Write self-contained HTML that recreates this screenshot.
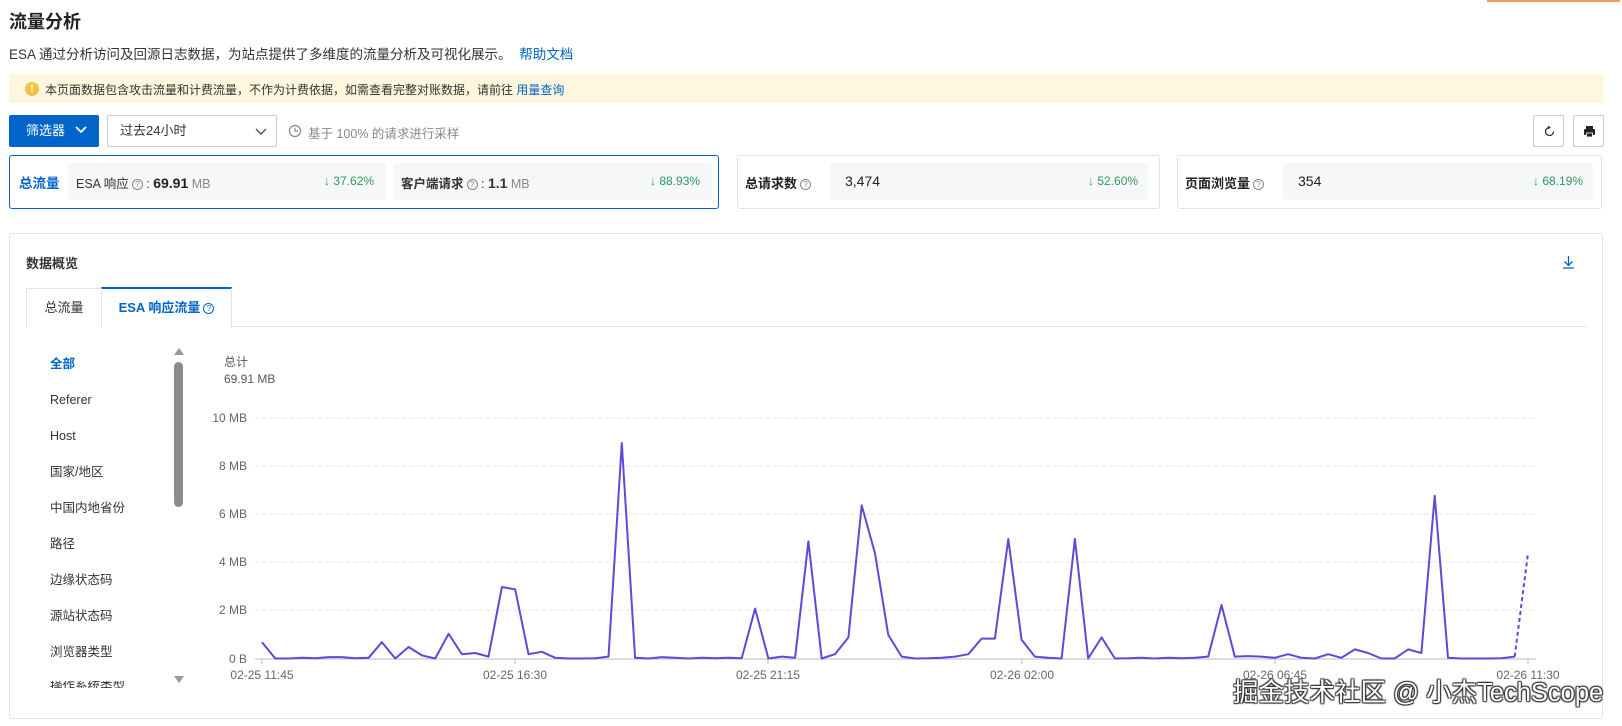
<!DOCTYPE html>
<html><head><meta charset="utf-8">
<style>
*{box-sizing:border-box;margin:0;padding:0}
body{width:1622px;height:726px;background:#fff;font-family:"Liberation Sans","Noto Sans CJK SC",sans-serif;color:#333;position:relative;overflow:hidden}
.a{position:absolute}
.q{display:inline-block;width:11px;height:11px;border:1px solid #888;border-radius:50%;font-size:8px;line-height:9px;text-align:center;color:#888;vertical-align:1px;margin-left:3px}
.box{position:absolute;background:#f6f7f9;border-radius:2px}
.g{color:#2d9a5a;font-size:12px}
</style></head><body>
<div class="a" style="left:1487px;top:0;width:133px;height:2px;background:#f59a5a"></div>
<div class="a" style="left:9px;top:8px;font-size:18px;font-weight:bold;color:#222">流量分析</div>
<div class="a" style="left:9px;top:43px;font-size:13.5px;color:#333">ESA 通过分析访问及回源日志数据，为站点提供了多维度的流量分析及可视化展示。 <span style="color:#0064c8;margin-left:4px">帮助文档</span></div>
<div class="a" style="left:9px;top:74px;width:1595px;height:29px;background:#fdf7dd"></div>
<div class="a" style="left:25px;top:82px;width:14px;height:14px;border-radius:50%;background:#f5c242;color:#fff;font-size:11px;font-weight:bold;text-align:center;line-height:14px">!</div>
<div class="a" style="left:45px;top:81px;font-size:12px;color:#333">本页面数据包含攻击流量和计费流量，不作为计费依据，如需查看完整对账数据，请前往 <span style="color:#0064c8">用量查询</span></div>
<div class="a" style="left:9px;top:115px;width:90px;height:32px;background:#0064c8;border-radius:2px;color:#fff;font-size:13px;line-height:32px;padding-left:17px">筛选器 <svg width="12" height="8" style="margin-left:6px;vertical-align:1px"><path d="M1 1l5 5 5-5" stroke="#fff" stroke-width="1.8" fill="none"/></svg></div>
<div class="a" style="left:107px;top:115px;width:170px;height:32px;border:1px solid #ccc;border-radius:2px;font-size:13px;line-height:30px;padding-left:12px;color:#333">过去24小时<svg width="12" height="8" class="a" style="left:147px;top:12px"><path d="M1 1l5 5 5-5" stroke="#555" stroke-width="1.4" fill="none"/></svg></div>
<svg class="a" style="left:288px;top:124px" width="14" height="14"><circle cx="7" cy="7" r="5.5" stroke="#888" stroke-width="1.2" fill="none"/><path d="M7 3.5V7h3" stroke="#888" stroke-width="1.2" fill="none"/></svg>
<div class="a" style="left:308px;top:123px;font-size:12.5px;color:#888">基于 100% 的请求进行采样</div>
<div class="a" style="left:1533px;top:115px;width:31px;height:32px;border:1px solid #ccc;border-radius:2px"><svg class="a" style="left:10px;top:10px" width="11" height="11"><path d="M5.5 1.5A4 4 0 1 0 9.5 5.5" stroke="#333" stroke-width="1.3" fill="none"/><path d="M4 0l2 1.5-2 1.5" stroke="#333" fill="none"/></svg></div>
<div class="a" style="left:1573px;top:115px;width:31px;height:32px;border:1px solid #ccc;border-radius:2px"><svg class="a" style="left:9px;top:9px" width="13" height="13"><rect x="3" y="1" width="7" height="3" fill="#222"/><rect x="1" y="4" width="11" height="6" rx="1" fill="#222"/><rect x="3.5" y="8" width="6" height="4" fill="#222" stroke="#fff" stroke-width=".8"/></svg></div>

<div class="a" style="left:9px;top:155px;width:710px;height:54px;border:1px solid #0064c8;border-radius:3px"></div>
<div class="a" style="left:19px;top:172px;font-size:13.5px;font-weight:bold;color:#0064c8">总流量</div>
<div class="box" style="left:68px;top:163px;width:318px;height:37px"></div>
<div class="a" style="left:76px;top:173px;font-size:12.5px;color:#333">ESA 响应<span class="q">?</span> : <b style="font-size:14px;color:#222">69.91</b> <span style="color:#888">MB</span></div>
<div class="a g" style="left:324px;top:174px">↓ 37.62%</div>
<div class="box" style="left:393px;top:163px;width:319px;height:37px"></div>
<div class="a" style="left:401px;top:173px;font-size:12.5px;font-weight:bold;color:#333">客户端请求<span class="q" style="font-weight:normal">?</span><span style="font-weight:normal"> : </span><b style="font-size:14px">1.1</b> <span style="color:#888;font-weight:normal">MB</span></div>
<div class="a g" style="left:650px;top:174px">↓ 88.93%</div>

<div class="a" style="left:737px;top:155px;width:423px;height:54px;border:1px solid #e3e3e3;border-radius:3px"></div>
<div class="a" style="left:745px;top:173px;font-size:13px;font-weight:bold;color:#222">总请求数<span class="q" style="font-weight:normal">?</span></div>
<div class="box" style="left:830px;top:163px;width:318px;height:37px"></div>
<div class="a" style="left:845px;top:173px;font-size:14px;color:#222">3,474</div>
<div class="a g" style="left:1088px;top:174px">↓ 52.60%</div>

<div class="a" style="left:1177px;top:155px;width:425px;height:54px;border:1px solid #e3e3e3;border-radius:3px"></div>
<div class="a" style="left:1185px;top:173px;font-size:13px;font-weight:bold;color:#222">页面浏览量<span class="q" style="font-weight:normal">?</span></div>
<div class="box" style="left:1283px;top:163px;width:310px;height:37px"></div>
<div class="a" style="left:1298px;top:173px;font-size:14px;color:#222">354</div>
<div class="a g" style="left:1533px;top:174px">↓ 68.19%</div>

<div class="a" style="left:9px;top:233px;width:1594px;height:486px;border:1px solid #e3e3e3;border-radius:3px"></div>
<div class="a" style="left:26px;top:253px;font-size:13px;font-weight:bold;color:#333">数据概览</div>
<svg class="a" style="left:1562px;top:255px" width="13" height="14"><path d="M6.5 1v9M2.5 6.5l4 4 4-4M1 13h11" stroke="#0064c8" stroke-width="1.3" fill="none"/></svg>
<div class="a" style="left:26px;top:326px;width:1561px;height:1px;background:#e3e3e3"></div>
<div class="a" style="left:26px;top:288px;width:76px;height:39px;border:1px solid #e3e3e3;border-bottom:none;background:#fff;font-size:13px;line-height:38px;text-align:center;color:#333">总流量</div>
<div class="a" style="left:101px;top:287px;width:131px;height:41px;border:1px solid #e3e3e3;border-top:2px solid #0064c8;border-bottom:none;background:#fff;font-size:13px;line-height:38px;text-align:center;color:#0064c8;font-weight:bold">ESA 响应流量<span class="q" style="border-color:#0064c8;color:#0064c8;font-weight:normal">?</span></div>

<div class="a" style="left:50px;top:346px;font-size:12.5px;line-height:36px;color:#333">
<div style="color:#0064c8;font-weight:bold">全部</div><div>Referer</div><div>Host</div><div>国家/地区</div><div>中国内地省份</div><div>路径</div><div>边缘状态码</div><div>源站状态码</div><div>浏览器类型</div>
</div>
<div class="a" style="left:50px;top:681px;font-size:12.5px;color:#333;height:7px;overflow:hidden;line-height:10px">操作系统类型</div>
<svg class="a" style="left:174px;top:348px" width="10" height="8"><path d="M0 7h10L5 0z" fill="#999"/></svg>
<svg class="a" style="left:174px;top:676px" width="10" height="8"><path d="M0 0h10L5 7z" fill="#999"/></svg>
<div class="a" style="left:174px;top:362px;width:9px;height:145px;background:#8c8c8c;border-radius:5px"></div>

<div class="a" style="left:224px;top:353px;font-size:12px;color:#555">总计</div>
<div class="a" style="left:224px;top:372px;font-size:12px;color:#555">69.91 MB</div>
<svg class="a" style="left:0;top:0" width="1622" height="726" id="ch">
<g font-family="Liberation Sans, sans-serif" font-size="12" fill="#666" text-anchor="end">
<text x="247" y="422">10 MB</text><text x="247" y="470">8 MB</text><text x="247" y="518">6 MB</text><text x="247" y="566">4 MB</text><text x="247" y="614">2 MB</text><text x="247" y="663">0 B</text>
</g>
<g stroke="#e6e6e6" stroke-dasharray="4 3"><path d="M255 418H1536M255 466H1536M255 514H1536M255 562H1536M255 610H1536"/></g>
<path d="M255 659H1536" stroke="#bbb"/>
<g stroke="#bbb"><path d="M262 659v5M515 659v5M768 659v5M1022 659v5M1275 659v5M1528 659v5"/></g>
<g font-family="Liberation Sans, sans-serif" font-size="12" fill="#666" text-anchor="middle">
<text x="262" y="679">02-25 11:45</text><text x="515" y="679">02-25 16:30</text><text x="768" y="679">02-25 21:15</text><text x="1022" y="679">02-26 02:00</text><text x="1275" y="679">02-26 06:45</text><text x="1528" y="679">02-26 11:30</text>
</g>
<polyline id="ln" fill="none" stroke="#5b4bd8" stroke-width="2" stroke-linejoin="round"/>
<polyline id="ld" fill="none" stroke="#5b4bd8" stroke-width="2" stroke-dasharray="4 3"/>
</svg>
<div class="a" style="left:1233px;top:672px;font-size:25.5px;color:#fff;text-shadow:0 0 1px #333,1px 1px 1px #333,-1px -1px 1px #333,1px -1px 1px #333,-1px 1px 1px #333;white-space:nowrap">掘金技术社区 @ 小杰TechScope</div>
<script>
var v=[0.7,0.02,0.02,0.05,0.03,0.08,0.08,0.03,0.05,0.7,0.02,0.5,0.15,0.02,1.05,0.2,0.25,0.1,3.0,2.9,0.2,0.3,0.05,0.02,0.02,0.03,0.1,9.0,0.05,0.02,0.08,0.05,0.02,0.05,0.03,0.05,0.03,2.1,0.02,0.1,0.05,4.9,0.02,0.2,0.9,6.4,4.4,1.0,0.1,0.02,0.03,0.05,0.1,0.2,0.85,0.85,5.0,0.8,0.1,0.05,0.02,5.0,0.02,0.9,0.02,0.03,0.05,0.02,0.05,0.03,0.05,0.1,2.25,0.1,0.12,0.1,0.05,0.2,0.05,0.02,0.2,0.05,0.4,0.25,0.02,0.02,0.4,0.25,6.8,0.05,0.02,0.02,0.02,0.03,0.1,4.4];
function P(i){return (262+i*1266/95).toFixed(1)+","+(659-v[i]*24).toFixed(1)}
var s=[];for(var i=0;i<95;i++)s.push(P(i));
document.getElementById("ln").setAttribute("points",s.join(" "));
document.getElementById("ld").setAttribute("points",P(94)+" "+P(95));
</script>
</body></html>
